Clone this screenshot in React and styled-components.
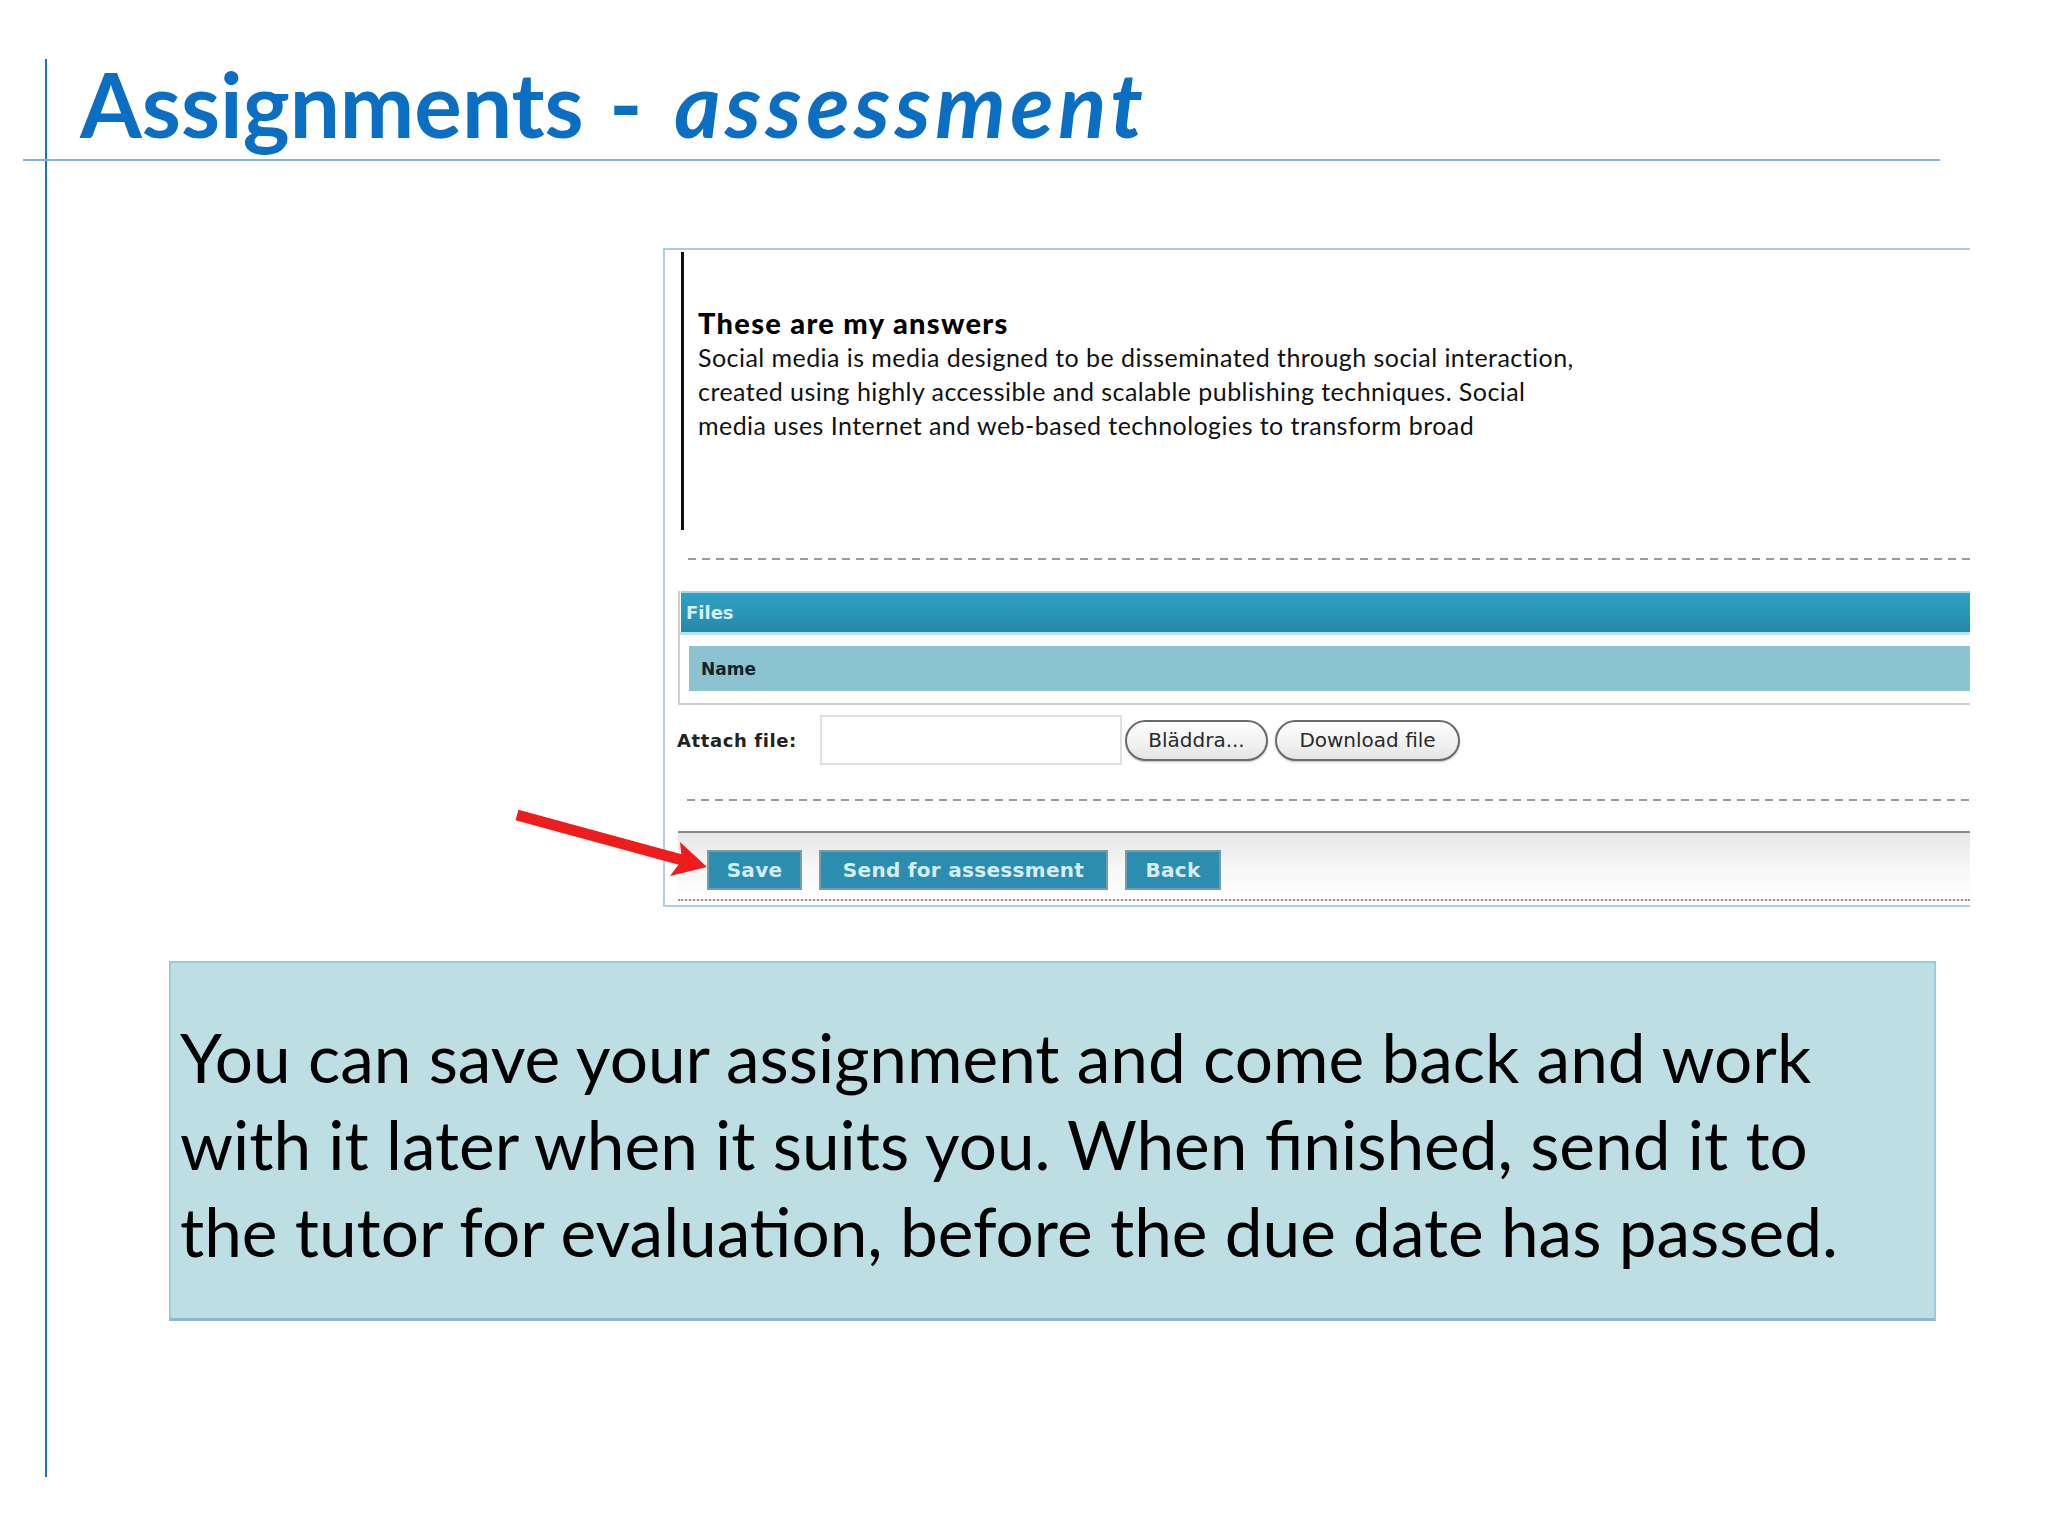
import React from "react";
import styled, { createGlobalStyle } from "styled-components";

const Global = createGlobalStyle`
  html, body { margin: 0; padding: 0; background: #ffffff; }
  body { width: 2048px; height: 1536px; overflow: hidden; }
  * { box-sizing: border-box; }
`;

const Slide = styled.div`
  position: relative;
  width: 2048px;
  height: 1536px;
  padding: 59px 0 0 45px;
  background: #ffffff;
  font-family: Lato, "Open Sans", sans-serif;
`;

const Frame = styled.div`
  height: 1418px;
  border-left: 2px solid #1a72c6;
  display: flex;
  flex-direction: column;
`;

const Header = styled.header`
  margin-left: -24px;
  width: 1917px;
  height: 102px;
  padding: 0 0 11px 57px;
  border-bottom: 2px solid #86aede;
  display: flex;
  align-items: flex-end;
`;

const Title = styled.h1`
  margin: 0;
  font-family: Lato, "Open Sans", sans-serif;
  font-weight: 700;
  font-size: 89px;
  line-height: 1;
  color: #0a6ec2;
  white-space: nowrap;
`;

const Dash = styled.span`
  margin: 0 10px 0 4px;
`;

const Em = styled.span`
  font-style: italic;
  letter-spacing: 4.5px;
`;

const Panel = styled.section`
  margin: 87px 0 0 616px;
  width: 1307px;
  border-top: 2px solid #a9cde2;
  border-left: 2px solid #a9cde2;
  border-bottom: 2px solid #a9cde2;
  padding-bottom: 4px;
  display: flex;
  flex-direction: column;
  background: #ffffff;
`;

const AnswerBlock = styled.div`
  margin: 2px 0 0 16px;
  height: 278px;
  border-left: 3px solid #111;
  padding: 54px 0 0 14px;
`;

const AnswerTitle = styled.div`
  font-family: Lato, sans-serif;
  font-weight: 900;
  font-size: 29px;
  line-height: 34px;
  letter-spacing: 1.3px;
  color: #000;
`;

const AnswerText = styled.p`
  margin: 0;
  font-family: Lato, sans-serif;
  font-size: 25px;
  line-height: 34px;
  letter-spacing: 0.45px;
  color: #111;
`;

const Dashed = styled.div`
  margin: ${(p) => p.$top}px 0 0 ${(p) => p.$left}px;
  height: 2px;
  background: repeating-linear-gradient(to right, #9a9a9a 0 8px, transparent 8px 14px);
`;

const FilesBox = styled.div`
  margin: 31px 0 0 13px;
  border-left: 2px solid #cfcfcf;
  border-bottom: 2px solid #cfcfcf;
`;

const FilesBar = styled.div`
  height: 41px;
  margin-left: 1px;
  padding-left: 5px;
  display: flex;
  align-items: center;
  border-top: 2px solid #a6d6e6;
  background: linear-gradient(to bottom, #31a0c6, #2a94b8 55%, #2588a9);
  font-family: "DejaVu Sans", Verdana, sans-serif;
  font-weight: 700;
  font-size: 18px;
  color: #d6f1f8;
`;

const NameWrap = styled.div`
  padding: 11px 0 12px 9px;
  background: #fff;
  border-top: 3px solid #bde0ea;
`;

const NameRow = styled.div`
  height: 45px;
  padding-left: 12px;
  display: flex;
  align-items: center;
  background: #8bc3d1;
  font-family: "DejaVu Sans", Verdana, sans-serif;
  font-weight: 700;
  font-size: 17px;
  color: #14232b;
`;

const AttachRow = styled.div`
  margin: 10px 0 0 12px;
  height: 50px;
  display: flex;
  align-items: center;
`;

const AttachLabel = styled.label`
  width: 143px;
  font-family: "DejaVu Sans", Verdana, sans-serif;
  font-weight: 700;
  font-size: 18px;
  letter-spacing: 0.6px;
  color: #222;
`;

const FileInput = styled.div`
  width: 302px;
  height: 50px;
  border: 2px solid #e0e0e0;
  background: #fff;
`;

const PillButton = styled.button`
  margin-left: ${(p) => p.$gap}px;
  width: ${(p) => p.$w}px;
  height: 41px;
  border: 2px solid #6a6a6a;
  border-radius: 21px;
  background: linear-gradient(to bottom, #ffffff, #f1f1f1 60%, #e4e4e4);
  box-shadow: 0 1px 2px rgba(0, 0, 0, 0.25);
  font-family: "DejaVu Sans", Verdana, sans-serif;
  font-size: 20px;
  color: #2a2a2a;
  padding: 0;
  white-space: nowrap;
`;

const Toolbar = styled.div`
  margin: 30px 0 0 13px;
  height: 70px;
  padding: 17px 0 0 29px;
  border-top: 2px solid #8a8a8a;
  border-bottom: 2px dotted #9a9a9a;
  background: linear-gradient(to bottom, #e6e6e6, #f6f6f6 50%, #ffffff);
  display: flex;
  gap: 17px;
  align-items: flex-start;
`;

const ActionButton = styled.button`
  width: ${(p) => p.$w}px;
  height: 40px;
  padding: 0;
  border: 2px solid #7a9ba8;
  background: #2c8db0;
  font-family: "DejaVu Sans", Verdana, sans-serif;
  font-weight: 700;
  font-size: 20px;
  color: #d3eef5;
  letter-spacing: 0.3px;
`;

const InfoBox = styled.section`
  margin: 54px 0 0 122px;
  width: 1767px;
  height: 360px;
  padding: 50px 0 0 9px;
  background: #bddfe3;
  border: 2px solid #9ccbdc;
  border-bottom: 3px solid #8db7d6;
`;

const InfoText = styled.p`
  margin: 0;
  font-family: Lato, sans-serif;
  font-size: 67.5px;
  line-height: 87px;
  color: #000;
  white-space: nowrap;
`;

const ArrowWrap = styled.svg`
  position: absolute;
  left: 510px;
  top: 805px;
  width: 205px;
  height: 80px;
  overflow: visible;
`;

export default function App() {
  return (
    <>
      <Global />
      <Slide>
        <Frame>
          <Header>
            <Title>
              Assignments<Dash> - </Dash>
              <Em>assessment</Em>
            </Title>
          </Header>

          <Panel>
            <AnswerBlock>
              <AnswerTitle>These are my answers</AnswerTitle>
              <AnswerText>
                Social media is media designed to be disseminated through social interaction,
                <br />
                created using highly accessible and scalable publishing techniques. Social
                <br />
                media uses Internet and web-based technologies to transform broad
              </AnswerText>
            </AnswerBlock>

            <Dashed $top={28} $left={23} />

            <FilesBox>
              <FilesBar>Files</FilesBar>
              <NameWrap>
                <NameRow>Name</NameRow>
              </NameWrap>
            </FilesBox>

            <AttachRow>
              <AttachLabel>Attach file:</AttachLabel>
              <FileInput />
              <PillButton $gap={3} $w={143}>Bläddra...</PillButton>
              <PillButton $gap={7} $w={185}>Download file</PillButton>
            </AttachRow>

            <Dashed $top={34} $left={22} />

            <Toolbar>
              <ActionButton $w={95}>Save</ActionButton>
              <ActionButton $w={289}>Send for assessment</ActionButton>
              <ActionButton $w={96}>Back</ActionButton>
            </Toolbar>
          </Panel>

          <InfoBox>
            <InfoText>
              You can save your assignment and come back and work
              <br />
              with it later when it suits you. When finished, send it to
              <br />
              the tutor for evaluation, before the due date has passed.
            </InfoText>
          </InfoBox>
        </Frame>

        <ArrowWrap viewBox="0 0 205 80">
          <line x1="7" y1="10" x2="172" y2="55" stroke="#ee1c1c" strokeWidth="11" strokeLinecap="butt" />
          <polygon points="197,62 170,37 172,55 160,71" fill="#ee1c1c" />
        </ArrowWrap>
      </Slide>
    </>
  );
}
